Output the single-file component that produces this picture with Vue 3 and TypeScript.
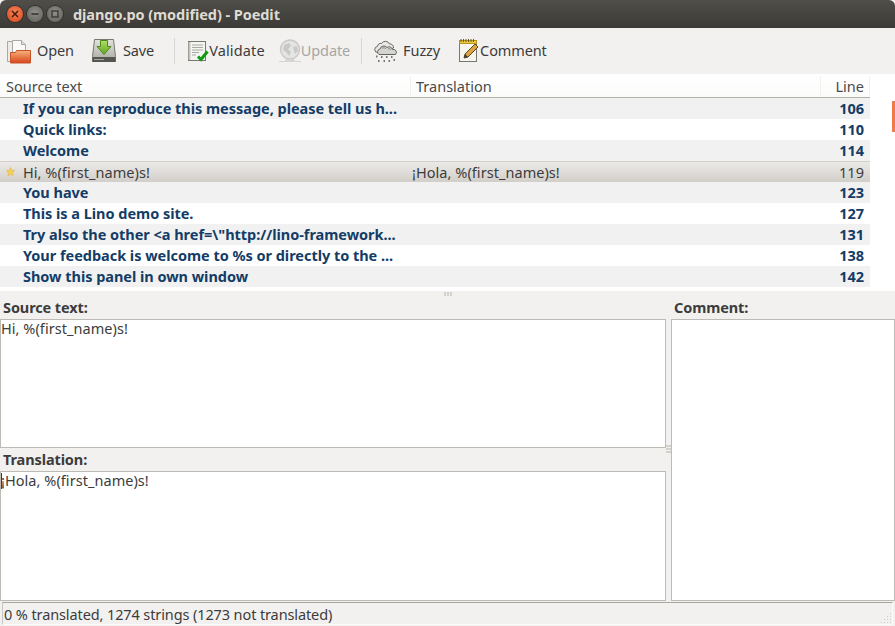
<script setup lang="ts">
interface Row {
  source: string
  translation: string
  line: number
  done?: boolean
}

const rows: Row[] = [
  { source: 'If you can reproduce this message, please tell us h...', translation: '', line: 106 },
  { source: 'Quick links:', translation: '', line: 110 },
  { source: 'Welcome', translation: '', line: 114 },
  { source: 'Hi, %(first_name)s!', translation: '¡Hola, %(first_name)s!', line: 119, done: true },
  { source: 'You have', translation: '', line: 123 },
  { source: 'This is a Lino demo site.', translation: '', line: 127 },
  { source: 'Try also the other <a href=\\"http://lino-framework...', translation: '', line: 131 },
  { source: 'Your feedback is welcome to %s or directly to the ...', translation: '', line: 138 },
  { source: 'Show this panel in own window', translation: '', line: 142 },
]
</script>

<template>
  <div class="window">
    <!-- title bar -->
    <header class="titlebar">
      <div class="win-buttons">
        <span class="win-btn close"><svg width="8" height="8" viewBox="0 0 8 8"><path d="M1 1l6 6M7 1L1 7" stroke="#4a1c0c" stroke-width="1.6" /></svg></span>
        <span class="win-btn"><svg width="8" height="8" viewBox="0 0 8 8"><path d="M0.5 4h7" stroke="#38372f" stroke-width="1.6" /></svg></span>
        <span class="win-btn"><svg width="8" height="8" viewBox="0 0 8 8"><rect x="1" y="1" width="6" height="6" fill="none" stroke="#38372f" stroke-width="1.3" /></svg></span>
      </div>
      <span class="title">django.po (modified) - Poedit</span>
    </header>

    <!-- toolbar -->
    <div class="toolbar">
      <button class="tool open">
        <svg width="24" height="26" viewBox="0 0 24 26">
          <defs>
            <linearGradient id="fold" x1="0" y1="0" x2="0" y2="1"><stop offset="0" stop-color="#f7b27c" /><stop offset="1" stop-color="#d9441a" /></linearGradient>
          </defs>
          <path d="M0.500 3.500h6v20h-6z" fill="#ecebe8" stroke="#a8a8a4" />
          <path d="M5.500 2.500h9l4 4v10h-13z" fill="#fafaf9" stroke="#a8a8a4" />
          <path d="M14.500 2.500v4h4" fill="#dedddb" stroke="#a8a8a4" />
          <path d="M3.500 14.500h5l1-2h14v12.500h-20z" fill="url(#fold)" stroke="#c5532a" />
        </svg>
        <span class="lbl open-lbl">Open</span>
      </button>
      <button class="tool save">
        <svg width="24" height="26" viewBox="0 0 24 26">
          <defs>
            <linearGradient id="drv" x1="0" y1="0" x2="0" y2="1"><stop offset="0" stop-color="#e2e2dc" /><stop offset="1" stop-color="#a9aaa2" /></linearGradient>
            <linearGradient id="arr" x1="0" y1="0" x2="0" y2="1"><stop offset="0" stop-color="#b2e066" /><stop offset="1" stop-color="#5fa421" /></linearGradient>
          </defs>
          <path d="M2.500 1.500h19l2 17v5h-23v-5z" fill="url(#drv)" stroke="#77786f" />
          <rect x="0.500" y="19" width="23" height="5" fill="#55564f" />
          <rect x="2" y="21" width="10" height="1" fill="#a5a69f" />
          <path d="M8.500 2.500h7v6h3.500l-7 8-7-8h3.500z" fill="url(#arr)" stroke="#4e8a1c" />
        </svg>
        <span class="lbl save-lbl">Save</span>
      </button>
      <i class="sep"></i>
      <button class="tool validate">
        <svg width="21" height="26" viewBox="0 0 21 26">
          <rect x="0.500" y="3.500" width="17" height="19" fill="#f4f4f1" stroke="#77786f" />
          <path d="M4 7h11M4 9.500h11M4 12h11M4 14.500h7M4 17h4" stroke="#a8a9a3" />
          <path d="M1.500 4v18" stroke="#c4c4bf" stroke-width="2" />
          <path d="M10 18.500l3 3 6.500-8" fill="none" stroke="#119a11" stroke-width="3" />
        </svg>
        <span class="lbl">Validate</span>
      </button>
      <button class="tool update">
        <svg width="22" height="26" viewBox="0 0 22 26">
          <circle cx="11" cy="11.500" r="9.500" fill="#e4e4e2" stroke="#c8c8c6" stroke-width="1.400" />
          <path d="M5 7l5-2 2 3-3 3 3 3-2 4-3-4-3-2zM14 9l4-1 1 5-3 3z" fill="#c8c8c6" />
          <path d="M7 21h8l1 2h6v1H0v-1h6z" fill="#d5d5d3" />
        </svg>
        <span class="lbl">Update</span>
      </button>
      <i class="sep second"></i>
      <button class="tool fuzzy">
        <svg width="24" height="24" viewBox="0 0 24 24">
          <path d="M4 13.500a3 3 0 0 1-.5-6 3.500 3.500 0 0 1 4-3 4.500 4.500 0 0 1 8 .5 3.500 3.500 0 0 1 4 4z" fill="#e8e8e6" stroke="#6a6b65" />
          <path d="M5 15.500a3 3 0 0 1 1-5.500 4 4 0 0 1 7-1.500 3.500 3.500 0 0 1 5.500 2 3 3 0 0 1 3 5z" fill="#d4d4d1" stroke="#62635d" />
          <path d="M8 9.500a2.500 2.500 0 0 1 4 .5M14 10a2 2 0 0 1 3 1" fill="none" stroke="#8a8b85" />
          <path d="M2 17.500h1.500M7 18h1.500M12 18h1.500M17 18h1.500M4 22h1.500M9.500 22h1.500M14.500 22h1.500M19.500 21h1.500" stroke="#74756f" stroke-width="1.800" />
        </svg>
        <span class="lbl fuzzy-lbl">Fuzzy</span>
      </button>
      <button class="tool comment">
        <svg width="21" height="26" viewBox="0 0 21 26">
          <rect x="0.500" y="3.500" width="17" height="20" fill="#f7f6ee" stroke="#77786f" />
          <rect x="0.500" y="2.500" width="17" height="3" fill="#edc93c" stroke="#b39722" />
          <path d="M2 1v3M4.500 1v3M7 1v3M9.500 1v3M12 1v3M14.500 1v3" stroke="#6b5c1b" />
          <path d="M5 20l1-4 10-10 3 3-10 10z" fill="#d9a441" stroke="#5b4a26" />
          <path d="M5 20l1-4 3 3z" fill="#3c3b37" />
        </svg>
        <span class="lbl">Comment</span>
      </button>
    </div>

    <!-- translations list -->
    <section class="list-area">
      <div class="list">
        <div class="list-head">
          <span class="h-source">Source text</span>
          <span class="h-trans">Translation</span>
          <span class="h-line">Line</span>
        </div>
        <div
          v-for="row in rows"
          :key="row.line"
          class="row"
          :class="{ done: row.done }"
        >
          <span class="c-source">
            <svg v-if="row.done" class="star" width="9" height="9" viewBox="0 0 10 10"><path d="M5 .5l1.400 3 3.200.4-2.300 2.200.6 3.200L5 8.300l-2.900 1.500.6-3.200L.4 3.900l3.200-.4z" fill="#f6cf5a" stroke="#e0b040" stroke-width=".6" /></svg>
            {{ row.source }}
          </span>
          <span class="c-trans">{{ row.translation }}</span>
          <span class="c-line">{{ row.line }}</span>
        </div>
      </div>
      <div class="gutter"><span class="marker"></span></div>
    </section>

    <div class="sash"><i></i><i></i><i></i></div>

    <!-- editors -->
    <section class="editors">
      <div class="left">
        <label class="ed-label">Source text:</label>
        <div class="box source-box">Hi, %(first_name)s!</div>
        <label class="ed-label second">Translation:</label>
        <div class="box trans-box"><span class="caret"></span>¡Hola, %(first_name)s!</div>
      </div>
      <div class="v-sash"><i></i><i></i><i></i></div>
      <div class="right">
        <label class="ed-label">Comment:</label>
        <div class="box comment-box"></div>
      </div>
    </section>

    <footer class="status">
      <span class="status-text">0 % translated, 1274 strings (1273 not translated)</span>
      <svg class="grip" width="12" height="12" viewBox="0 0 12 12">
        <path d="M10 1h1v1h-1zM10 4h1v1h-1zM7 4h1v1H7zM10 7h1v1h-1zM7 7h1v1H7zM4 7h1v1H4zM10 10h1v1h-1zM7 10h1v1H7zM4 10h1v1H4zM1 10h1v1H1z" fill="#cfcdc7" />
      </svg>
    </footer>
  </div>
</template>

<style>
html,
body {
  margin: 0;
  background: #f2f1f0;
}
</style>

<style scoped>
.window {
  width: 895px;
  height: 626px;
  display: flex;
  flex-direction: column;
  overflow: hidden;
  background: #f2f1f0;
  color: #3c3c3c;
  font-family: "Noto Sans", "Open Sans", sans-serif;
  font-size: 14.5px;
  letter-spacing: -0.11px;
}

/* title bar */
.titlebar {
  flex: 0 0 28px;
  display: flex;
  align-items: center;
  background: linear-gradient(#4f4e49, #3b3a36);
  border-radius: 6px 6px 0 0;
}

.win-buttons {
  display: flex;
  gap: 4px;
  margin-left: 7px;
}

.win-btn {
  width: 16px;
  height: 16px;
  border-radius: 50%;
  display: flex;
  align-items: center;
  justify-content: center;
  background: radial-gradient(circle at 50% 40%, #8f8e88, #5f5e58);
  box-shadow: 0 0 0 1px #33322e;
}

.win-btn.close {
  background: radial-gradient(circle at 50% 40%, #f4865a, #d9431a);
}

.title {
  margin-left: 10px;
  color: #dfdbd2;
  font-weight: 700;
  letter-spacing: -0.07px;
}

/* toolbar */
.toolbar {
  flex: 0 0 46px;
  display: flex;
  align-items: center;
  padding-left: 7px;
  box-sizing: border-box;
}

.tool {
  display: flex;
  align-items: center;
  padding: 0;
  border: 0;
  background: none;
  font: inherit;
  letter-spacing: inherit;
  color: #3c3c3c;
}

.lbl {
  margin-top: -3px;
}

.open-lbl {
  margin-left: 6px;
}

.save-lbl {
  margin-left: 7px;
}

.fuzzy-lbl {
  margin-left: 5px;
}

.save {
  margin-left: 18px;
}

.sep {
  width: 1px;
  height: 26px;
  margin: 0 13px 0 20px;
  background: #d8d6d2;
}

.sep.second {
  margin: 0 12px 0 11px;
}

.validate .lbl {
  letter-spacing: 0.14px;
}

.update {
  margin-left: 14px;
  color: #a6a6a4;
}

.comment {
  margin-left: 19px;
}

/* list */
.list-area {
  flex: 0 0 217px;
  display: flex;
  background: #fff;
}

.list {
  flex: 0 0 870px;
}

.list-head {
  height: 24px;
  box-sizing: border-box;
  display: grid;
  grid-template-columns: 410px 410px 50px;
  align-items: center;
  padding-top: 1px;
  letter-spacing: 0;
  background: linear-gradient(#fff, #fbfbfa);
  border-bottom: 1px solid #b3b0aa;
  color: #4a4a48;
}

.h-source {
  padding-left: 6px;
}

.h-trans {
  padding-left: 5px;
  border-left: 1px solid #f2f1f0;
}

.h-line {
  padding-right: 5px;
  text-align: right;
  border-left: 1px solid #f2f1f0;
  border-right: 1px solid #f2f1f0;
}

.row {
  height: 21px;
  box-sizing: border-box;
  padding-bottom: 2px;
  display: grid;
  grid-template-columns: 410px 410px 50px;
  align-items: center;
  font-weight: 700;
  letter-spacing: -0.03px;
  color: #133c67;
  white-space: nowrap;
}

.row:nth-child(even) {
  background: #f1f1f1;
}

.row.done {
  font-weight: 400;
  letter-spacing: 0.05px;
  color: #3c3c3c;
  background: linear-gradient(#eceae8, #d2cfca);
  border-top: 1px solid #d2cfca;
}

.c-source {
  position: relative;
  padding-left: 23px;
}

.star {
  position: absolute;
  left: 6px;
  top: 5px;
}

.c-trans {
  padding-left: 2px;
}

.c-line {
  padding-right: 6px;
  text-align: right;
}

.gutter {
  flex: 1;
  display: flex;
  justify-content: flex-end;
  padding-top: 27px;
}

.marker {
  width: 3px;
  height: 31px;
  background: #ee7b49;
}

/* sash between list and editors */
.sash {
  flex: 0 0 6px;
  display: flex;
  justify-content: center;
  gap: 1px;
  padding-top: 1px;
  box-sizing: border-box;
}

.sash i {
  width: 2px;
  height: 4px;
  background: #d3d1cc;
}

/* editors */
.editors {
  flex: 0 0 303px;
  display: flex;
}

.left {
  flex: 0 0 666px;
  display: flex;
  flex-direction: column;
}

.v-sash {
  flex: 0 0 5px;
  display: flex;
  flex-direction: column;
  justify-content: center;
  gap: 1px;
}

.v-sash i {
  height: 2px;
  background: #d3d1cc;
}

.right {
  flex: 1;
  display: flex;
  flex-direction: column;
}

.ed-label {
  height: 22px;
  line-height: 21px;
  padding: 0 3px;
  font-weight: 700;
}

.ed-label.second {
  height: 23px;
  line-height: 22px;
}

.box {
  box-sizing: border-box;
  background: #fff;
  border: 1px solid #bdbbb5;
  line-height: 17px;
  letter-spacing: 0.05px;
  color: #3c3c3c;
}

.source-box {
  height: 129px;
}

.trans-box {
  height: 130px;
  position: relative;
}

.caret {
  position: absolute;
  left: 0;
  top: 1px;
  width: 1px;
  height: 16px;
  background: #3c3c3c;
}

.comment-box {
  flex: 0 0 282px;
}

/* status bar */
.status {
  flex: 0 0 23px;
  margin: 1px 2px 1px 2px;
  box-sizing: border-box;
  display: flex;
  align-items: center;
  justify-content: space-between;
  border-top: 1px solid #a8a6a0;
  border-left: 1px solid #c8c6c0;
  border-right: 1px solid #fbfbfa;
  border-bottom: 1px solid #fbfbfa;
  padding-left: 1px;
}

.grip {
  margin: 8px 0 0 0;
}
</style>
